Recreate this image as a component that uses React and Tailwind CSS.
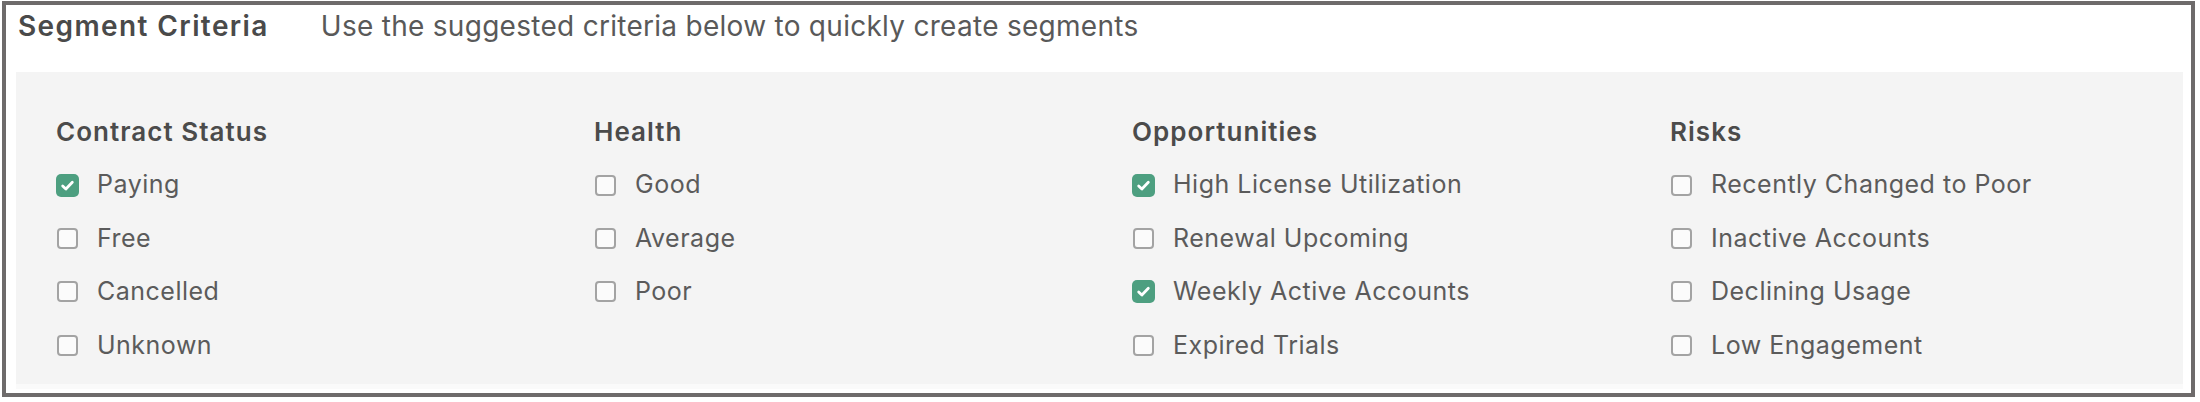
import React from "react";

const COLUMNS = [
  {
    title: "Contract Status",
    items: [
      { label: "Paying", checked: true },
      { label: "Free" },
      { label: "Cancelled" },
      { label: "Unknown" },
    ],
  },
  {
    title: "Health",
    items: [{ label: "Good" }, { label: "Average" }, { label: "Poor" }],
  },
  {
    title: "Opportunities",
    items: [
      { label: "High License Utilization", checked: true },
      { label: "Renewal Upcoming" },
      { label: "Weekly Active Accounts", checked: true },
      { label: "Expired Trials" },
    ],
  },
  {
    title: "Risks",
    items: [
      { label: "Recently Changed to Poor" },
      { label: "Inactive Accounts" },
      { label: "Declining Usage" },
      { label: "Low Engagement" },
    ],
  },
];

function Checkbox({ checked }) {
  return (
    <span className="w-[23px] flex justify-center shrink-0">
      {checked ? (
        <span className="w-[23px] h-[23px] rounded-[5px] bg-[#4d9f80] flex items-center justify-center">
          <svg width="15" height="15" viewBox="0 0 14 14" fill="none">
            <path d="M2.5 7.4l3 2.9 6-6.3" stroke="#fff" strokeWidth="2.6" strokeLinecap="round" strokeLinejoin="round" />
          </svg>
        </span>
      ) : (
        <span className="w-[21px] h-[21px] rounded-[4px] border-2 border-[#a3a3a3] bg-[#fbfbfb]" />
      )}
    </span>
  );
}

export default function App() {
  return (
    <div className="w-[2200px] h-[402px] bg-white pl-[2px] pt-px" style={{ fontFamily: "Inter, 'Open Sans', sans-serif" }}>
      <div className="w-[2193px] h-[396px] border-4 border-[#6e6b6b] flex flex-col">
        {/* Header */}
        <div className="h-[67px] pl-[12px] pt-[4px] flex gap-[52px] leading-[34px]">
          <span className="text-[28px] font-semibold tracking-[0.05em] text-[#4a4a4a]">Segment Criteria</span>
          <span className="text-[28px] tracking-[0.01em] text-[#595959]">Use the suggested criteria below to quickly create segments</span>
        </div>

        {/* Criteria panel */}
        <div className="ml-[10px] mr-[8px] h-[317px] bg-[#f4f4f4] border-b-[5px] border-[#fafafa] pt-[33px] pl-[40px] grid grid-cols-[538px_538px_538px_1fr]">
          {COLUMNS.map((col) => (
            <div key={col.title} className="flex flex-col">
              <div className="h-[53.4px] flex items-center text-[26px] font-semibold tracking-[0.04em] text-[#4b4b4b]">
                {col.title}
              </div>
              {col.items.map((item) => (
                <div key={item.label} className="h-[53.4px] flex items-center">
                  <Checkbox checked={item.checked} />
                  <span className="ml-[18px] text-[25px] tracking-[0.02em] text-[#5b5b5b]">{item.label}</span>
                </div>
              ))}
            </div>
          ))}
        </div>
      </div>
    </div>
  );
}
